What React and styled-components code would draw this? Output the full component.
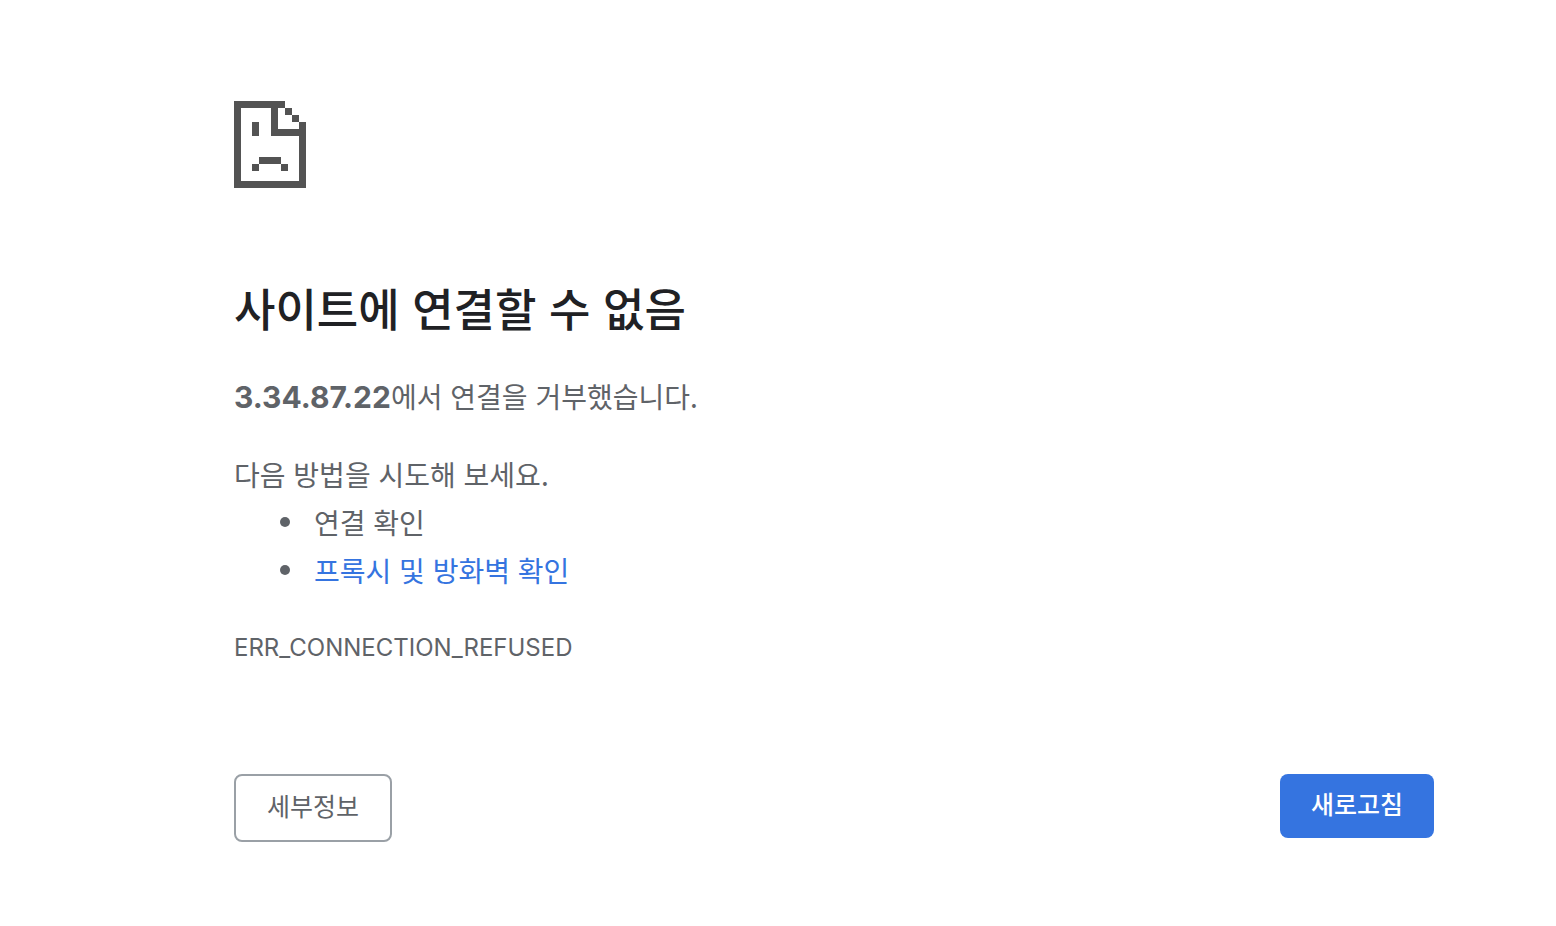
import React from "react";
import styled, { createGlobalStyle } from "styled-components";

const GlobalStyle = createGlobalStyle`
  *, *::before, *::after { box-sizing: border-box; }
  body {
    margin: 0;
    background: #fff;
    color: #5f6368;
    font-family: "Noto Sans CJK KR", sans-serif;
    font-size: 28px;
    line-height: 48px;
  }
`;

const Page = styled.main`
  padding: 101px 122px 84px 234px;
`;

const Icon = styled.svg`
  display: block;
  width: 72px;
  height: 87px;
  fill: #535353;
`;

const Title = styled.h1`
  margin: 90px 0 34px;
  color: #202124;
  font-size: 45px;
  font-weight: 500;
  line-height: 60px;
`;

const Paragraph = styled.p`
  margin: 0 0 30px;
`;

const Host = styled.strong`
  font-family: Inter, sans-serif;
  font-size: 30px;
  font-weight: 700;
  line-height: 1;
`;

const Suggestions = styled.section`
  margin-bottom: 30px;

  p { margin: 0; }
`;

const SuggestionList = styled.ul`
  margin: 0;
  padding: 0 0 0 46px;
  list-style: none;
`;

const Suggestion = styled.li`
  display: flex;
  align-items: center;
  gap: 24px;

  &::before {
    content: "";
    width: 10px;
    height: 10px;
    border-radius: 50%;
    background: #5f6368;
  }
`;

const Link = styled.a`
  color: #3574e0;
  text-decoration: none;
`;

const ErrorCode = styled.div`
  font-family: Inter, sans-serif;
  font-size: 24px;
  line-height: 48px;
`;

const Actions = styled.div`
  display: flex;
  justify-content: space-between;
  align-items: flex-start;
  margin-top: 102px;
`;

const Button = styled.button`
  padding: ${(p) => (p.$primary ? "11px 31px 17px" : "11px 31px 17px")};
  border: ${(p) => (p.$primary ? "0" : "2px solid #9aa0a6")};
  border-radius: 8px;
  background: ${(p) => (p.$primary ? "#3574e0" : "#fff")};
  color: ${(p) => (p.$primary ? "#fff" : "#5f6368")};
  font-family: inherit;
  font-size: 25px;
  font-weight: ${(p) => (p.$primary ? 500 : 400)};
  line-height: 36px;
  cursor: pointer;
`;

export default function App() {
  return (
    <>
      <GlobalStyle />
      <Page lang="ko">
        <Icon viewBox="0 0 72 87" shapeRendering="crispEdges" aria-hidden="true">
          <path d="M0 0H51V7H44V28H65V21H72V87H0ZM7 7V80H65V35H37V7Z" fillRule="evenodd" />
          <path d="M51 7h7v7h-7zM58 14h7v7h-7zM18 21h7v14h-7zM25 56h22v7h-22zM18 63h7v7h-7zM47 63h7v7h-7z" />
        </Icon>
        <Title>사이트에 연결할 수 없음</Title>
        <Paragraph>
          <Host>3.34.87.22</Host>에서 연결을 거부했습니다.
        </Paragraph>
        <Suggestions>
          <p>다음 방법을 시도해 보세요.</p>
          <SuggestionList>
            <Suggestion>연결 확인</Suggestion>
            <Suggestion>
              <Link href="#buttons">프록시 및 방화벽 확인</Link>
            </Suggestion>
          </SuggestionList>
        </Suggestions>
        <ErrorCode>ERR_CONNECTION_REFUSED</ErrorCode>
        <Actions id="buttons">
          <Button type="button">세부정보</Button>
          <Button type="button" $primary>새로고침</Button>
        </Actions>
      </Page>
    </>
  );
}
